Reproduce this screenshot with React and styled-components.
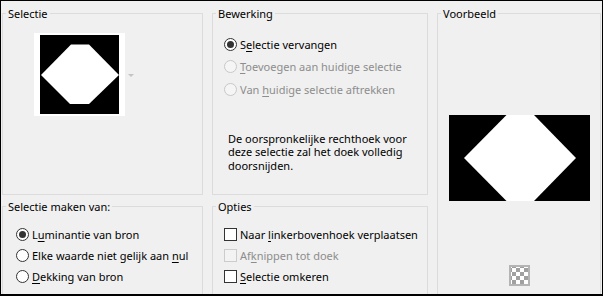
import React from "react";
import styled, { createGlobalStyle } from "styled-components";

const GlobalStyle = createGlobalStyle`
  html, body {
    margin: 0;
    padding: 0;
    background: #f0f0f0;
  }
  body {
    font-family: "Noto Sans", "Open Sans", sans-serif;
    font-size: 11px;
    color: #000;
  }
`;

const Frame = styled.div`
  width: 603px;
  height: 296px;
  box-sizing: border-box;
  border: 1px solid #000;
  border-bottom-width: 2px;
  background: #f0f0f0;
  overflow: hidden;
  padding: 12px 0 0 1px;
  display: grid;
  grid-template-columns: 201px 216px 164px;
  grid-template-rows: 182px 1fr;
  column-gap: 9px;
  row-gap: 11px;
`;

const Group = styled.div`
  position: relative;
  border: 1px solid #dcdcdc;
  border-bottom: ${({ $open }) => ($open ? "none" : "1px solid #dcdcdc")};
  grid-row: ${({ $rows }) => $rows || "auto"};
  grid-column: ${({ $col }) => $col || "auto"};
  padding: ${({ $pad }) => $pad || "0"};
  box-sizing: border-box;
  display: flex;
  flex-direction: column;
`;

const Legend = styled.span`
  position: absolute;
  top: -8px;
  left: 3px;
  padding: 0 2px;
  line-height: 15px;
  background: #f0f0f0;
  color: #000;
`;

const ThumbRow = styled.div`
  display: flex;
  align-items: center;
  gap: 3px;
`;

const Thumb = styled.div`
  background: #fff;
  padding: 2px 6px;
  line-height: 0;
`;

const DropArrow = styled.span`
  width: 0;
  height: 0;
  border-left: 3px solid transparent;
  border-right: 3px solid transparent;
  border-top: 3px solid #c4c4c4;
  margin-top: 1px;
`;

const OptionRow = styled.label`
  display: flex;
  align-items: center;
  gap: 3px;
  height: ${({ $h }) => $h || "22px"};
  white-space: nowrap;
  color: ${({ $disabled }) => ($disabled ? "#8d8d8d" : "#000")};
  u {
    text-decoration-thickness: 1px;
    text-underline-offset: 2px;
  }
`;

const Radio = styled.span`
  width: 13px;
  height: 13px;
  box-sizing: border-box;
  border-radius: 50%;
  border: 1px solid ${({ $disabled }) => ($disabled ? "#c8c8c8" : "#333")};
  background: ${({ $disabled }) => ($disabled ? "#f5f5f5" : "#fff")};
  display: flex;
  align-items: center;
  justify-content: center;
  flex-shrink: 0;
  &::after {
    content: "";
    display: ${({ $checked }) => ($checked ? "block" : "none")};
    width: 7px;
    height: 7px;
    border-radius: 50%;
    background: #333;
  }
`;

const Check = styled.span`
  width: 13px;
  height: 13px;
  box-sizing: border-box;
  border: 1px solid ${({ $disabled }) => ($disabled ? "#cccccc" : "#333")};
  background: ${({ $disabled }) => ($disabled ? "#f3f3f3" : "#fff")};
  flex-shrink: 0;
`;

const Note = styled.p`
  margin: 31px 0 0 4px;
  width: 190px;
  line-height: 13.5px;
`;

const Preview = styled.div`
  align-self: center;
  margin-top: 101px;
  line-height: 0;
`;

const Checker = styled.div`
  align-self: center;
  margin-top: auto;
  margin-bottom: 8px;
  width: 21px;
  height: 21px;
  box-sizing: border-box;
  border: 2px solid #b4b4b4;
  background-color: #fff;
  background-image: conic-gradient(
    #a0a0a0 0 25%,
    #fff 0 50%,
    #a0a0a0 0 75%,
    #fff 0
  );
  background-size: 8px 8px;
  background-position: 1px 1px;
`;

const ThumbShape = () => (
  <svg width="79" height="79" viewBox="0 0 79 79">
    <rect width="79" height="79" fill="#000" />
    <polygon
      points="31,9.5 49,9.5 79,40 49,69 30,69 1,40"
      fill="#fff"
    />
  </svg>
);

const PreviewShape = () => (
  <svg width="141" height="86" viewBox="0 0 141 86">
    <rect width="141" height="86" fill="#000" />
    <polygon points="57.5,0 85,0 127,43 85,86 57.5,86 15,43" fill="#fff" />
  </svg>
);

export default function App() {
  return (
    <>
      <GlobalStyle />
      <Frame>
        <Group $pad="19px 0 0 31px">
          <Legend>Selectie</Legend>
          <ThumbRow>
            <Thumb>
              <ThumbShape />
            </Thumb>
            <DropArrow />
          </ThumbRow>
        </Group>

        <Group $pad="19px 0 0 11px">
          <Legend>Bewerking</Legend>
          <OptionRow $h="22.5px">
            <Radio $checked />
            <span>
              S<u>e</u>lectie vervangen
            </span>
          </OptionRow>
          <OptionRow $h="22.5px" $disabled>
            <Radio $disabled />
            <span>
              <u>T</u>oevoegen aan huidige selectie
            </span>
          </OptionRow>
          <OptionRow $h="22.5px" $disabled>
            <Radio $disabled />
            <span>
              Van <u>h</u>uidige selectie aftrekken
            </span>
          </OptionRow>
          <Note>
            De oorspronkelijke rechthoek voor deze selectie zal het doek
            volledig doorsnijden.
          </Note>
        </Group>

        <Group $rows="1 / 3" $col="3" $open>
          <Legend>Voorbeeld</Legend>
          <Preview>
            <PreviewShape />
          </Preview>
          <Checker />
        </Group>

        <Group $open $pad="16.5px 0 0 13px">
          <Legend>Selectie maken van:</Legend>
          <OptionRow $h="21px">
            <Radio $checked />
            <span>
              L<u>u</u>minantie van bron
            </span>
          </OptionRow>
          <OptionRow $h="21px">
            <Radio />
            <span>
              Elke waarde niet gelijk aan <u>n</u>ul
            </span>
          </OptionRow>
          <OptionRow $h="21px">
            <Radio />
            <span>
              <u>D</u>ekking van bron
            </span>
          </OptionRow>
        </Group>

        <Group $open $pad="16.5px 0 0 11px">
          <Legend>Opties</Legend>
          <OptionRow $h="21px">
            <Check />
            <span>
              Naar <u>l</u>inkerbovenhoek verplaatsen
            </span>
          </OptionRow>
          <OptionRow $h="21px" $disabled>
            <Check $disabled />
            <span>
              Af<u>k</u>nippen tot doek
            </span>
          </OptionRow>
          <OptionRow $h="21px">
            <Check />
            <span>
              <u>S</u>electie omkeren
            </span>
          </OptionRow>
        </Group>
      </Frame>
    </>
  );
}
